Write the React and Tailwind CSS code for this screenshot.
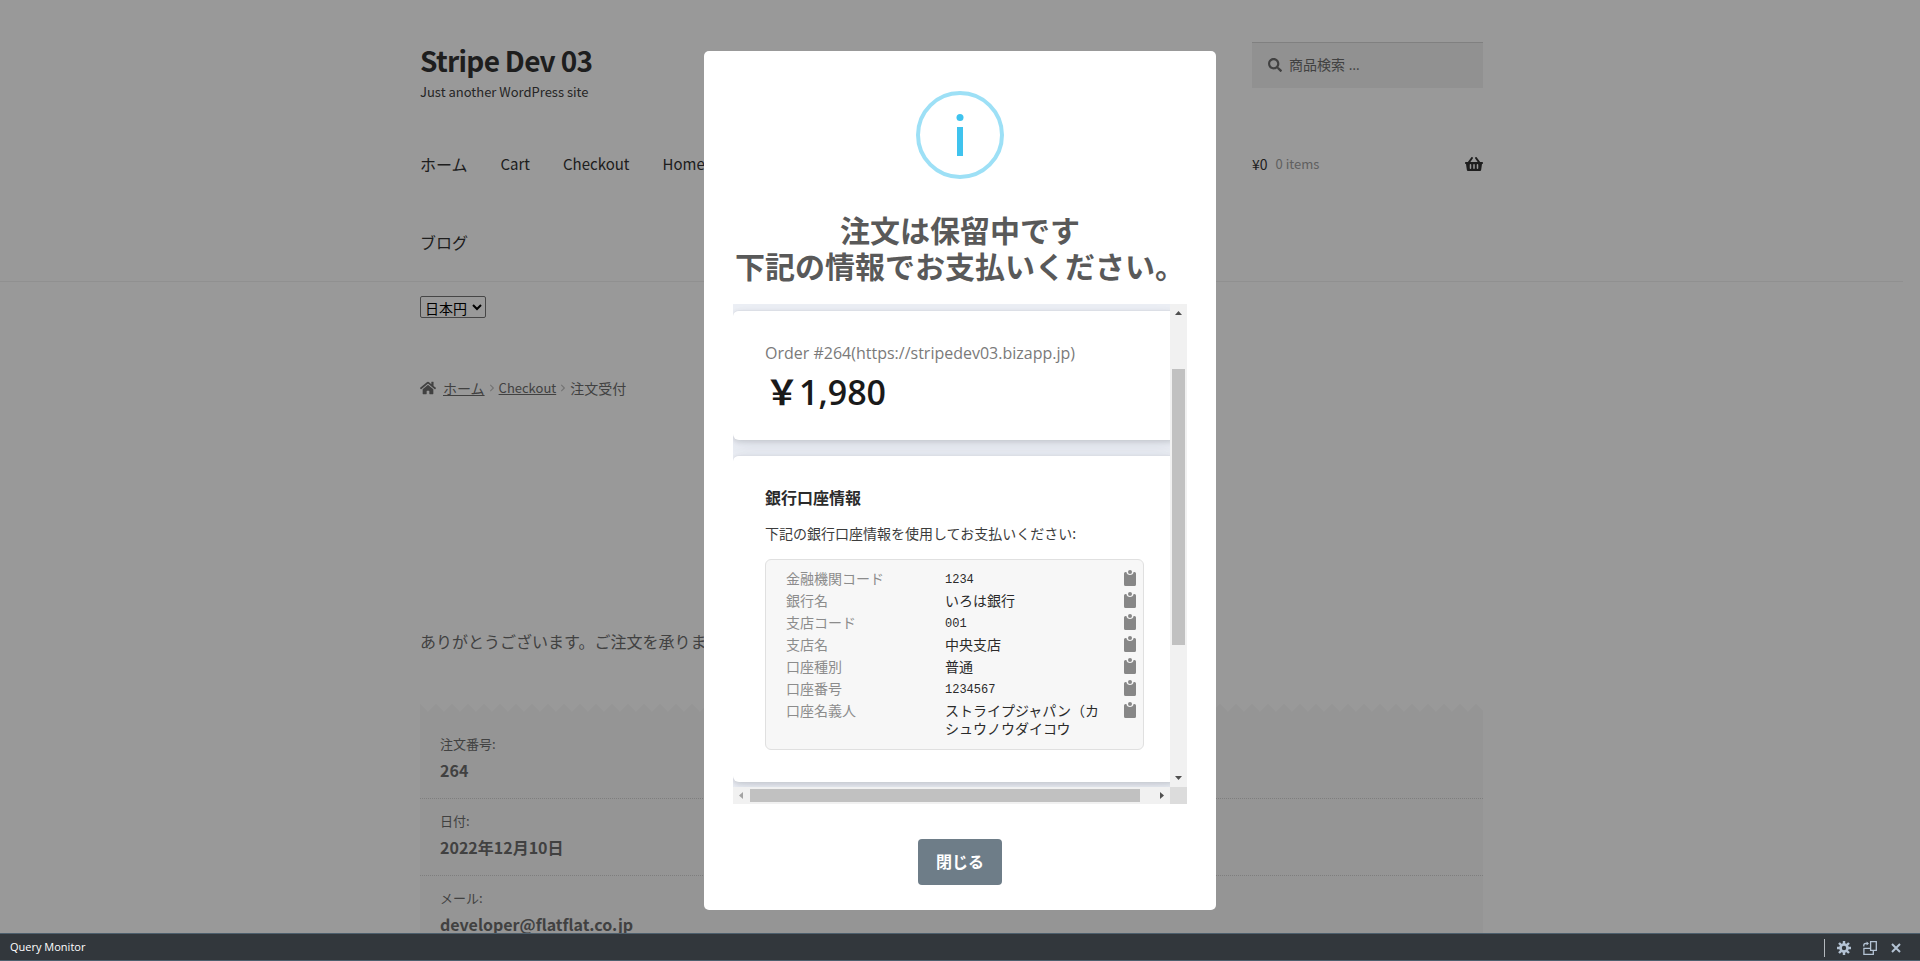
import React, { useState } from 'react';
import { FaHome, FaSearch, FaShoppingBasket, FaChevronRight } from 'react-icons/fa';

const NAV_ITEMS = [
  { label: 'ホーム', className: 'text-[16px]' },
  { label: 'Cart', className: 'text-[15px]' },
  { label: 'Checkout', className: 'text-[15px]' },
  { label: 'Homepage', className: 'text-[15px]' },
];

const ORDER_ITEMS = [
  { label: '注文番号:', value: '264' },
  { label: '日付:', value: '2022年12月10日' },
  { label: 'メール:', value: 'developer@flatflat.co.jp' },
];

const BANK_ROWS = [
  { label: '金融機関コード', value: '1234', mono: true },
  { label: '銀行名', value: 'いろは銀行' },
  { label: '支店コード', value: '001', mono: true },
  { label: '支店名', value: '中央支店' },
  { label: '口座種別', value: '普通' },
  { label: '口座番号', value: '1234567', mono: true },
  { label: '口座名義人', value: 'ストライプジャパン（カ シュウノウダイコウ' },
];

function ClipboardIcon() {
  return (
    <svg width="12" height="16" viewBox="0 0 12 16" fill="#878787">
      <circle cx="6" cy="2" r="2" />
      <path d="M1.5 2H2.4C2.6 3.8 4 5 6 5S9.4 3.8 9.6 2H10.5A1.5 1.5 0 0 1 12 3.5V14.5A1.5 1.5 0 0 1 10.5 16H1.5A1.5 1.5 0 0 1 0 14.5V3.5A1.5 1.5 0 0 1 1.5 2Z" />
    </svg>
  );
}

function SiteHeader() {
  return (
    <header className="border-b border-[#f0f0f0] pt-[42px]">
      <div className="mx-auto w-full max-w-[1063px]">
        <div className="flex items-start justify-between">
          <div>
            <h1 className="text-[28px] font-bold leading-9 tracking-tight text-[#333333]">
              <a href="#home">Stripe Dev 03</a>
            </h1>
            <p className="text-[13px] leading-7 text-[#404040]">Just another WordPress site</p>
          </div>
          <form className="flex h-[46px] w-[231px] items-center gap-[7px] border-t border-[#d6d6d6] bg-[#f2f2f2] pb-[2px] pl-4 text-[#6d6d6d]">
            <FaSearch size={14} />
            <input
              type="search"
              aria-label="商品検索"
              placeholder="商品検索 …"
              className="min-w-0 flex-1 bg-transparent font-['Open_Sans','Noto_Sans_CJK_JP',sans-serif] text-[14px] placeholder:text-[#6d6d6d] focus:outline-none"
            />
          </form>
        </div>
        <div className="mt-[19px] flex items-start justify-between">
          <nav className="w-[800px]">
            <ul className="flex flex-wrap gap-x-[33px] text-[#333333]">
              {NAV_ITEMS.map((item) => (
                <li key={item.label} className="h-[78px]">
                  <a href="#nav" className={`block leading-[78px] ${item.className}`}>
                    {item.label}
                  </a>
                </li>
              ))}
              <li className="h-[78px] w-full">
                <a href="#blog" className="block text-[16px] leading-[78px]">
                  ブログ
                </a>
              </li>
            </ul>
          </nav>
          <a href="#cart" className="flex h-[78px] w-[231px] items-center text-[#333333]">
            <span className="text-[14px]">¥0</span>
            <span className="ml-2 flex-1 text-[13px] text-[#a0a0a0]">0 items</span>
            <FaShoppingBasket size={18} />
          </a>
        </div>
      </div>
    </header>
  );
}

function Receipt() {
  return (
    <section>
      <svg className="block h-2 w-full" aria-hidden="true">
        <defs>
          <pattern id="zigzag" width="16" height="8" patternUnits="userSpaceOnUse">
            <path d="M0 0L8 8L16 0V8H0Z" fill="#f8f8f8" />
          </pattern>
        </defs>
        <rect width="100%" height="8" fill="url(#zigzag)" />
      </svg>
      <ul className="bg-[#f8f8f8] pt-[10px]">
        {ORDER_ITEMS.map((item) => (
          <li key={item.label} className="h-[77px] border-b border-dotted border-[#d3d3d3] pl-5 pt-[10px]">
            <span className="block text-[13px] leading-6">{item.label}</span>
            <strong className="block text-[16px] font-bold leading-7">{item.value}</strong>
          </li>
        ))}
      </ul>
    </section>
  );
}

function StorePage() {
  return (
    <div className="min-h-screen bg-white pr-[17px] text-[#6d6d6d]">
      <SiteHeader />
      <main className="mx-auto w-full max-w-[1063px] pt-[14px]">
        <select
          aria-label="通貨"
          defaultValue="JPY"
          className="block h-[22px] w-[66px] rounded-[2px] border border-[#767676] bg-white text-[14px] leading-5 text-black"
        >
          <option value="JPY">日本円</option>
          <option value="USD">USD</option>
        </select>
        <nav className="mt-[58px] flex h-6 items-center text-[14px]">
          <FaHome size={16} className="mr-[7px]" />
          <a href="#home" className="underline">
            ホーム
          </a>
          <FaChevronRight size={8} className="mx-[3px] text-[#c4c4c4]" />
          <a href="#checkout" className="text-[13px] underline">
            Checkout
          </a>
          <FaChevronRight size={8} className="mx-[3px] text-[#c4c4c4]" />
          <span>注文受付</span>
        </nav>
        <p className="mt-[227px] text-[16px] leading-7">ありがとうございます。ご注文を承りました。</p>
        <div className="mt-[49px]">
          <Receipt />
        </div>
      </main>
    </div>
  );
}

function PaymentFrame() {
  return (
    <div className="grid h-[500px] grid-cols-[1fr_17px] grid-rows-[1fr_17px]">
      <div className="overflow-hidden bg-[#eceff5] pt-[6px]">
        <section className="h-[130px] w-[443px] rounded-md border-t border-[#dcdfe6] bg-white px-8 pt-[30px] shadow-[0_8px_20px_rgba(40,50,90,0.08),0_2px_5px_rgba(0,0,0,0.12)]">
          <p className="font-['Open_Sans','Noto_Sans_CJK_JP',sans-serif] text-[16px] leading-6 text-[#7a7a7a]">
            Order #264(https://stripedev03.bizapp.jp)
          </p>
          <p className="font-['Open_Sans','Noto_Sans_CJK_JP',sans-serif] text-[34px] font-semibold leading-[54px] text-[#1a1a1a]">
            ￥1,980
          </p>
        </section>
        <section className="mt-[15px] h-[327px] w-[443px] rounded-md border-t border-[#dcdfe6] bg-white px-8 pt-[29px] text-[#2b2b2b] shadow-[0_8px_20px_rgba(40,50,90,0.08),0_2px_5px_rgba(0,0,0,0.12)]">
          <h3 className="text-[16px] font-bold leading-6">銀行口座情報</h3>
          <p className="mt-3 text-[14px] leading-6 text-[#3c3c3c]">下記の銀行口座情報を使用してお支払いください:</p>
          <dl className="mt-[14px] rounded-md border border-[#e0e0e0] bg-[#f7f7f7] pb-3 pl-5 pr-[7px] pt-2 text-[14px]">
            {BANK_ROWS.map((row) => (
              <div key={row.label} className="flex min-h-[22px] items-start">
                <dt className="w-[159px] leading-5 text-[#8c8c8c]">{row.label}</dt>
                <dd
                  className={`w-[155px] ${
                    row.mono
                      ? "pt-[2px] font-['Liberation_Mono',monospace] text-[12px] leading-5"
                      : 'pt-px leading-[18px]'
                  }`}
                >
                  {row.value}
                </dd>
                <dd className="ml-auto pt-[2px]">
                  <button type="button" aria-label={`${row.label}をコピー`} className="block">
                    <ClipboardIcon />
                  </button>
                </dd>
              </div>
            ))}
          </dl>
        </section>
      </div>
      {/* Vertical scrollbar */}
      <div className="flex flex-col items-center bg-[#f1f1f1]">
        <svg width="17" height="17" viewBox="0 0 17 17" fill="#505050">
          <path d="M5 11L8.5 7L12 11Z" />
        </svg>
        <div className="mt-12 h-[276px] w-[13px] bg-[#c1c1c1]"></div>
        <svg className="mt-auto" width="17" height="17" viewBox="0 0 17 17" fill="#505050">
          <path d="M5 6L8.5 10L12 6Z" />
        </svg>
      </div>
      {/* Horizontal scrollbar */}
      <div className="flex items-center bg-[#f1f1f1]">
        <svg width="17" height="17" viewBox="0 0 17 17" fill="#a3a3a3">
          <path d="M10 5L6 8.5L10 12Z" />
        </svg>
        <div className="h-[13px] w-[390px] bg-[#c1c1c1]"></div>
        <svg className="ml-auto" width="17" height="17" viewBox="0 0 17 17" fill="#505050">
          <path d="M7 5L11 8.5L7 12Z" />
        </svg>
      </div>
      <div className="bg-[#dcdcdc]"></div>
    </div>
  );
}

function PaymentDialog({ onClose }) {
  return (
    <div className="absolute inset-0 flex items-start justify-center bg-black/40 pt-[51px]">
      <div role="dialog" aria-modal="true" className="w-full max-w-[512px] rounded-[5px] bg-white px-[29px] pb-[25px] pt-10 text-center">
        <svg className="mx-auto block" width="88" height="88" viewBox="0 0 88 88">
          <circle cx="44" cy="44" r="42" fill="none" stroke="#9de0f6" strokeWidth="4" />
          <circle cx="44" cy="26.5" r="3.5" fill="#3fc3ee" />
          <rect x="41" y="36" width="6" height="29" fill="#3fc3ee" />
        </svg>
        <h2 className="mt-8 whitespace-nowrap text-[30px] font-bold leading-9 text-[#595959]">
          注文は保留中です
          <br />
          下記の情報でお支払いください。
        </h2>
        <div className="mt-[21px] text-left">
          <PaymentFrame />
        </div>
        <button
          type="button"
          onClick={onClose}
          className="mt-[35px] h-[46px] w-[84px] rounded-[4px] bg-[#6e7d88] pb-[2px] text-[16px] font-bold text-white"
        >
          閉じる
        </button>
      </div>
    </div>
  );
}

function QueryMonitorBar() {
  return (
    <footer className="absolute inset-x-0 bottom-0 flex h-7 items-center border-y border-[#4d5f6d] bg-[#32373c] pl-[10px] pr-[17px] pt-px font-['Open_Sans',sans-serif] text-[11px] text-white">
      <span>Query Monitor</span>
      <div className="ml-auto flex h-[18px] items-center gap-3 border-l border-[#b4b9be] pl-3 text-[#b4c3d4]">
        <button type="button" aria-label="Settings">
          <svg width="14" height="14" viewBox="0 0 14 14" fill="none" stroke="currentColor">
            <circle cx="7" cy="7" r="3.5" strokeWidth="2.6" />
            <path d="M7 0V3M7 11V14M0 7H3M11 7H14M2 2L4.2 4.2M9.8 9.8L12 12M12 2L9.8 4.2M4.2 9.8L2 12" strokeWidth="2.4" />
          </svg>
        </button>
        <button type="button" aria-label="Toggle panel position">
          <svg width="14" height="14" viewBox="0 0 14 14" fill="none" stroke="currentColor" strokeWidth="1.3">
            <path d="M7.6 0.7H13.3V9.4H7.6Z" />
            <path d="M7 7.4H0.9V13.3H10.3V10" />
            <path d="M0.8 5.6V3.8Q1 2.5 2.6 2.5H4.4" />
            <path d="M3.6 0.4L6 2.5L3.6 4.6Z" fill="currentColor" stroke="none" />
          </svg>
        </button>
        <button type="button" aria-label="Close panel">
          <svg width="14" height="14" viewBox="0 0 14 14" fill="none" stroke="currentColor" strokeWidth="2">
            <path d="M3 3L11 11M11 3L3 11" />
          </svg>
        </button>
      </div>
    </footer>
  );
}

export default function App() {
  const [open, setOpen] = useState(true);

  return (
    <div className="relative h-screen overflow-hidden font-['Noto_Sans_CJK_JP',sans-serif]" lang="ja">
      <StorePage />
      {open && <PaymentDialog onClose={() => setOpen(false)} />}
      <QueryMonitorBar />
    </div>
  );
}
